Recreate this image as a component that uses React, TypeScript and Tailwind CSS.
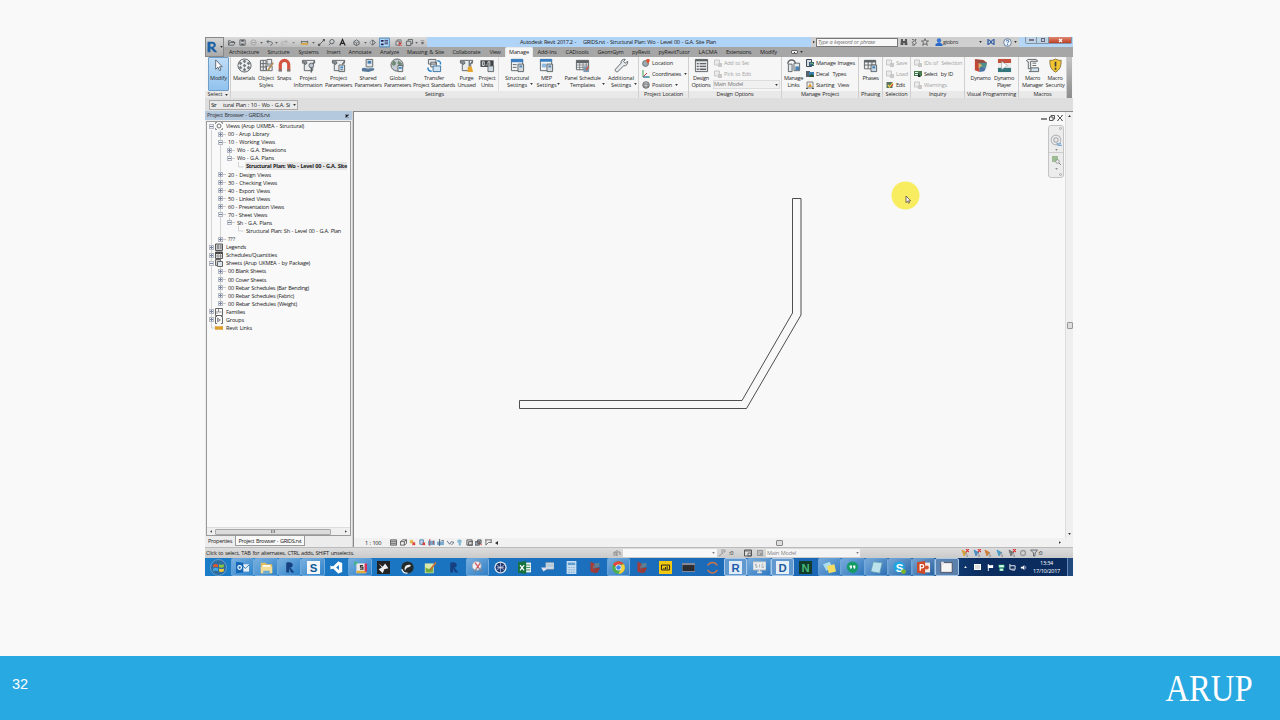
import React, { useLayoutEffect, useRef } from "react";

/* Text set to an exact run width by adjusting its letter spacing. */
function T({ w, className = "", children }: { w: number; className?: string; children: string }) {
  const ref = useRef<HTMLSpanElement>(null);
  useLayoutEffect(() => {
    const el = ref.current;
    if (!el) return;
    el.style.letterSpacing = "0px";
    const natural = el.getBoundingClientRect().width;
    el.style.letterSpacing = `${(w - natural) / children.length}px`;
  }, [w, children]);
  return (
    <span ref={ref} className={`inline-block shrink-0 whitespace-pre [word-spacing:0.6px] ${className}`}>
      {children}
    </span>
  );
}

function Svg({ className = "size-4", box = 16, children }: { className?: string; box?: number; children: React.ReactNode }) {
  return (
    <svg viewBox={`0 0 ${box} ${box}`} className={`block shrink-0 ${className}`} fill="none">
      {children}
    </svg>
  );
}

const Caret = ({ className = "" }: { className?: string }) => (
  <svg viewBox="0 0 4 3" className={`h-[2px] w-[3px] shrink-0 ${className}`}>
    <path d="M0 0h4L2 3z" fill="#333" />
  </svg>
);

/* ---------- ribbon icons ---------- */
const G = "#5f6468";
const clipboard = (
  <>
    <path d="M1.500 2.500h13v3h-2v8h-9v-8h-2z" fill="#e9eaeb" stroke={G} />
    <path d="M2 3l2.500 4 2-1.500L5 3M14.500 2.500l-2 4" stroke={G} fill="#8c9195" />
  </>
);
const ic = {
  modify: <path d="M5 2v10l2.400-2.200L9 13.500l1.600-.8L9 9.300h3z" fill="#fff" stroke="#5b6570" />,
  materials: (
    <>
      <circle cx="8" cy="8" r="7" fill="#eef0f1" stroke={G} />
      <path d="M8 1.500l2 2-2 2-2-2zM8 6l2 2-2 2-2-2zM8 10.500l2 2-2 2-2-2zM3.700 3.700l2 2-2 2-2-2zM12.300 3.700l2 2-2 2-2-2zM3.700 8.300l2 2-2 2-2-2zM12.300 8.300l2 2-2 2-2-2z" fill="#777c80" />
    </>
  ),
  styles: (
    <>
      <path d="M1.500 2.500h6v11h-6zM8.500 1.500h5v5h-5z" fill="#e8eaec" stroke={G} />
      <path d="M1.500 6h6M1.500 9.500h6M4.500 2.500v11M8 8.500h6v5H8z" stroke={G} />
      <path d="M15 4l-5 7-2 3 3-1.500L15.500 6z" fill="#b08a54" />
    </>
  ),
  snaps: (
    <>
      <path d="M3.500 14V7a4.500 4.500 0 019 0v7" stroke="#d4553f" strokeWidth="3.400" />
      <path d="M1.800 12h3.400v2.500H1.800zM10.800 12h3.400v2.500h-3.400z" fill="#777" />
    </>
  ),
  info: (
    <>
      {clipboard}
      <circle cx="11" cy="8" r="2.500" fill="#bcc6d0" stroke={G} />
      <path d="M11 10v5.500" stroke={G} strokeWidth="1.500" />
    </>
  ),
  params: (
    <>
      {clipboard}
      <path d="M8.500 7.500h6v7h-6z" fill="#dfe8f0" stroke={G} />
      <path d="M10 9h3v2h-3z" fill="#3f87c4" />
      <path d="M10 12.500h3" stroke={G} />
    </>
  ),
  shared: (
    <>
      <path d="M5.500 1.500h7v8h-7z" fill="#e1e7ec" stroke={G} />
      <path d="M7 3h4v3H7z" fill="#4a7eae" />
      <path d="M1 11c4-2 5 1 8 0h5v2l-6 2-7-1z" fill="#57799a" />
    </>
  ),
  global: (
    <>
      <circle cx="7.500" cy="7.500" r="6.500" fill="#c4cbd0" stroke={G} />
      <path d="M3 3c3 0 4 2 3 4s-3 1-4 0M9 2c0 2 4 2 4 5l-3 1-2-2z" fill="#6f8a72" />
      <path d="M8.500 8h5v6.500h-5z" fill="#dfe8f0" stroke={G} />
      <path d="M9.500 9.500h3v2h-3z" fill="#3f87c4" />
    </>
  ),
  transfer: (
    <>
      <path d="M1.500 1.500h8v5h-8zM4 4.500h6v5H4z" fill="#e4e6e8" stroke={G} />
      <path d="M6.500 8.500h8v6h-8z" fill="#cfe2f3" stroke="#39749f" />
      <path d="M1 10c0 3 2 4 4 4M11 3c3 0 3.500 1 3.500 4" stroke="#2e86c8" strokeWidth="1.600" />
    </>
  ),
  purge: (
    <>
      {clipboard}
      <path d="M11 3v6" stroke="#6c7a89" strokeWidth="1.500" />
      <path d="M9.500 9h4l1.500 6H9z" fill="#e6a62e" />
    </>
  ),
  units: (
    <>
      <path d="M.500 2.500h14v7H.500z" fill="#3d4246" />
      <path d="M2.500 4h2v4h-2zM8.500 4h2v4h-2z" stroke="#f1f1f1" strokeWidth=".9" />
      <path d="M6 7.500h1" stroke="#fff" />
      <path d="M8.500 8.500h6v6h-6z" fill="#cdd9e3" stroke={G} />
    </>
  ),
  structural: (
    <>
      <path d="M1.500 1.500h12v12h-12z" fill="#f0f2f4" stroke={G} />
      <path d="M1 1h13v3.500H1z" fill="#3a80c2" />
      <path d="M3 7h4M3 10h4" stroke={G} />
      <path d="M8.500 6.500h6v8h-6z" fill="#d2d9de" stroke={G} />
      <path d="M10 8h3v2h-3z" fill="#4c86b8" />
    </>
  ),
  mep: (
    <>
      <path d="M1.500 1.500h12v12h-12z" fill="#f0f2f4" stroke={G} />
      <path d="M1 1h13v3H1z" fill="#3a80c2" />
      <path d="M3 6h5v4H3z" fill="#8fbbe0" />
      <path d="M8.500 6.500h6v8h-6z" fill="#d2d9de" stroke={G} />
      <path d="M10 8h3v2h-3z" fill="#4c86b8" />
    </>
  ),
  schedule: (
    <>
      <path d="M1.500 2.500h13v10h-13z" fill="#f2f2f2" stroke={G} />
      <path d="M1.500 4h13" stroke={G} strokeWidth="3" />
      <path d="M1.500 7.500h13M1.500 10h13M5 3v10M8.500 3v10M12 3v10" stroke={G} strokeWidth=".7" />
      <path d="M9 9h6v6H9z" fill="#7c99af" />
      <path d="M12 13l2.500-4" stroke="#c95845" strokeWidth="1.500" />
    </>
  ),
  wrench: <path d="M14.500 3.500l-2.600 2.100-1.700-1.700 1.800-2.500c-2.700-.6-5 1.500-4.400 4L1.500 12c-1 1.500 1 3.500 2.500 2.500l6.400-6.200c2.700.5 4.700-2 4.100-4.800z" fill="#e8ebed" stroke={G} />,
  options: (
    <>
      <path d="M1.500 1.500h13v13h-13z" fill="#e6e6e6" stroke={G} />
      <path d="M1.500 2.500h13" stroke={G} strokeWidth="2" />
      <path d="M3 6h2M3 9h2M3 12h2M6 6h7M6 9h7M6 12h7" stroke={G} strokeWidth="1.400" />
    </>
  ),
  links: (
    <>
      <path d="M2 6a4 4 0 018 0" stroke={G} strokeWidth="1.600" />
      <path d="M2.500 6.500h4v8h-4zM8.500 5.500h6v8h-6z" fill="#e3e8eb" stroke={G} />
      <path d="M10 9h4v4h-4z" fill="#4a83b4" />
    </>
  ),
  phases: (
    <>
      <path d="M1.500 2.500h12v9h-12z" fill="#f0f0f0" stroke={G} />
      <path d="M1.500 3.500h12" stroke={G} strokeWidth="2.500" />
      <path d="M1.500 7.500h12M5.500 3v8M9.500 3v8" stroke={G} />
      <path d="M8.500 7.500h6v7h-6z" fill="#c6d8e6" stroke={G} />
      <path d="M10 9h3v2h-3z" fill="#3f7db1" />
    </>
  ),
  dynamo: (
    <>
      <path d="M2 1l5 3v11l-5-2z" fill="#c04a37" />
      <path d="M2 1l9 1 4 3-8 2z" fill="#a0493f" />
      <path d="M7 5l8 0-1 5-7 1z" fill="#4d8f8a" />
      <path d="M7 10h7l-2 4-5 1z" fill="#4c73a6" />
      <path d="M6 5l4 3-4 3z" fill="#d8b46c" />
    </>
  ),
  player: (
    <>
      <path d="M1 1h14v4.500H1z" fill="#c4513e" />
      <path d="M1 5.500h14v5H1z" fill="#ececec" />
      <path d="M1 10.500h14V15H1z" fill="#34787e" />
      <path d="M5 3.500l6 4.500-6 4.500z" fill="#fff" stroke="#69777c" strokeWidth=".5" />
    </>
  ),
  macro: (
    <>
      <path d="M3 1.500h9l1.500 2H6v8H3.500V4L1.500 3z" fill="#ececec" stroke={G} />
      <path d="M8 5.500h4M8 8h4" stroke={G} />
      <path d="M6.500 10.500h8v4h-10c2 0 2-2 2-4z" fill="#cfe0ec" stroke={G} />
    </>
  ),
  security: (
    <>
      <path d="M8 1c2 1.500 4 1.500 6 1.500 0 6-1 10-6 12.500C3 12.500 2 8.500 2 2.500 4 2.500 6 2.500 8 1z" fill="#f3c530" stroke="#85723a" />
      <path d="M8 4v5M8 10.500v2" stroke="#40403a" strokeWidth="1.800" />
    </>
  ),
};

function Big({ icon, lines, w, drop, active }: { icon: React.ReactNode; lines: [string, number][]; w: string; drop?: boolean; active?: boolean }) {
  return (
    <div className={`relative flex h-[34px] shrink-0 flex-col items-center ${w} ${active ? "rounded-[1px] border border-[#6f9fc9] bg-linear-to-b from-[#bfdcf5] to-[#90c3ee]" : ""}`}>
      <Svg className={`mb-[2px] size-[15px] ${active ? "mt-0" : "mt-[1px]"}`}>{icon}</Svg>
      {lines.map(([t, n]) => (
        <T key={t} w={n} className="leading-[7px]">{t}</T>
      ))}
      {drop && <Caret className="absolute right-0 bottom-[6px]" />}
    </div>
  );
}

function Panel({ w, label, labelW, children, drop }: { w: string; label: string; labelW: number; children: React.ReactNode; drop?: boolean }) {
  return (
    <div className={`flex h-[41px] shrink-0 flex-col border-r border-[#cfcfcf] ${w}`}>
      <div className="flex h-[34px]">{children}</div>
      <div className="flex h-[7px] items-center justify-center gap-[2px] bg-[#e9e9e9]">
        <T w={labelW} className="leading-[7px]">{label}</T>
        {drop && <Caret />}
      </div>
    </div>
  );
}

function Small({ icon, text, w, drop, off }: { icon: React.ReactNode; text: string; w: number; drop?: boolean; off?: boolean }) {
  return (
    <div className={`flex h-[11px] items-center gap-[2px] ${off ? "text-[#a5a5a5]" : ""}`}>
      <Svg className={`size-[8px] ${off ? "opacity-60" : ""}`} box={8}>{icon}</Svg>
      <T w={w} className="leading-[8px]">{text}</T>
      {drop && <Caret className="ml-[1px]" />}
    </div>
  );
}

const sm = {
  loc: <><circle cx="3.500" cy="4.500" r="3" fill="#9aa7ad" stroke="#56616a" strokeWidth=".7" /><path d="M6 5L4.300 2a1.800 1.800 0 113.400 0z" fill="#dd5633" /></>,
  coord: <><path d="M1 0v7h7" stroke="#3aa348" /><path d="M1 7l4-4" stroke="#c34" /><path d="M1 7h6" stroke="#3a78c8" /></>,
  pos: <><circle cx="4" cy="4" r="3.300" fill="#c3c8cb" stroke="#555" strokeWidth=".8" /><path d="M2 3h4v3H2z" stroke="#666" strokeWidth=".7" /></>,
  grey: <><path d="M.500 1h5v5h-5z" fill="#e4e4e4" stroke="#999" strokeWidth=".8" /><path d="M4 4h4v4H4z" fill="#aaa" /></>,
  img: <><path d="M.500.500h5v7h-5z" fill="#ddd" stroke="#3b4c5c" /><path d="M3 3h5v4H3z" fill="#33617f" /><path d="M4 5l2-1 2 2" stroke="#7ec06c" /></>,
  decal: <><path d="M0 1h4v6H0z" fill="#56626d" /><path d="M3 2h5v5H3z" fill="#377fae" /><path d="M3 6l3-2 2 2v1H3z" fill="#2c5133" /></>,
  start: <><path d="M1 1h6v6H1z" fill="#eee" stroke="#666" strokeWidth=".8" /><path d="M2 6l2-4 2 4z" fill="#e09a2d" /><path d="M0 7.500h2M6 7.500h2" stroke="#555" /></>,
  edit: <><path d="M.500 1h6v6h-6z" fill="#5a7560" /><path d="M2 4l1.500 2L7 2" stroke="#f2cf4c" strokeWidth="1.400" /><path d="M5 6l2-3" stroke="#c33" /></>,
  byid: <><path d="M0 1h8v5H0z" fill="#4a7b4f" /><path d="M1 2h3v1H1zM1 4h3v1H1z" fill="#dfe" /><path d="M4 3l3 4H4z" fill="#233" /></>,
};

function Ribbon() {
  return (
    <div className="flex h-[41px] bg-[#f6f6f6] text-[#2b2b2b]">
      <Panel w="w-[26px]" label="Select" labelW={15} drop>
        <div className="flex pl-[3px]"><Big active w="w-[21px]" icon={ic.modify} lines={[["Modify", 17]]} /></div>
      </Panel>
      <Panel w="w-[408px]" label="Settings" labelW={19}>
        <Big w="ml-[1px] w-[24px]" icon={ic.materials} lines={[["Materials", 22]]} />
        <Big w="w-[20px]" icon={ic.styles} lines={[["Object", 16], ["Styles", 14]]} />
        <Big w="w-[16px]" icon={ic.snaps} lines={[["Snaps", 14]]} />
        <Big w="w-[32px]" icon={ic.info} lines={[["Project", 17], ["Information", 29]]} />
        <Big w="w-[29px]" icon={ic.params} lines={[["Project", 17], ["Parameters", 27]]} />
        <Big w="w-[30px]" icon={ic.shared} lines={[["Shared", 17], ["Parameters", 27]]} />
        <Big w="w-[29px]" icon={ic.global} lines={[["Global", 16], ["Parameters", 27]]} />
        <Big w="w-[44px]" icon={ic.transfer} lines={[["Transfer", 20], ["Project Standards", 42]]} />
        <Big w="w-[21px]" icon={ic.purge} lines={[["Purge", 14], ["Unused", 18]]} />
        <Big w="w-[20px]" icon={ic.units} lines={[["Project", 17], ["Units", 12]]} />
        <div className="mr-[2px] ml-[1px] h-[34px] w-px bg-[#ddd]" />
        <Big drop w="w-[32px]" icon={ic.structural} lines={[["Structural", 24], ["Settings", 20]]} />
        <Big drop w="w-[27px]" icon={ic.mep} lines={[["MEP", 11], ["Settings", 20]]} />
        <Big drop w="w-[45px]" icon={ic.schedule} lines={[["Panel Schedule", 36], ["Templates", 25]]} />
        <Big drop w="w-[32px]" icon={ic.wrench} lines={[["Additional", 26], ["Settings", 20]]} />
      </Panel>
      <Panel w="w-[50px]" label="Project Location" labelW={39}>
        <div className="pl-[3px]">
          <Small icon={sm.loc} text="Location" w={21} />
          <Small icon={sm.coord} text="Coordinates" w={29} drop />
          <Small icon={sm.pos} text="Position" w={20} drop />
        </div>
      </Panel>
      <Panel w="w-[93px]" label="Design Options" labelW={37}>
        <Big w="w-[24px]" icon={ic.options} lines={[["Design", 16], ["Options", 19]]} />
        <div className="flex w-[67px] flex-col">
          <div className="pl-[1px]"><Small off icon={sm.grey} text="Add to Set" w={25} /></div>
          <div className="pl-[1px]"><Small off icon={sm.grey} text="Pick to Edit" w={27} /></div>
          <div className="mt-px flex h-[9px] items-center justify-between border border-[#ddd] bg-[#f1f1f1] pr-[1px] text-[#777]">
            <T w={29} className="leading-[7px]">Main Model</T>
            <Caret />
          </div>
        </div>
      </Panel>
      <Panel w="w-[77px]" label="Manage Project" labelW={38}>
        <Big w="w-[23px]" icon={ic.links} lines={[["Manage", 19], ["Links", 12]]} />
        <div className="pl-[1px]">
          <Small icon={sm.img} text="Manage Images" w={39} />
          <Small icon={sm.decal} text="Decal  Types" w={30} />
          <Small icon={sm.start} text="Starting  View" w={33} />
        </div>
      </Panel>
      <Panel w="w-[24px]" label="Phasing" labelW={19}>
        <Big w="w-[23px]" icon={ic.phases} lines={[["Phases", 16]]} />
      </Panel>
      <Panel w="w-[28px]" label="Selection" labelW={22}>
        <div className="pl-[3px]">
          <Small off icon={sm.grey} text="Save" w={11} />
          <Small off icon={sm.grey} text="Load" w={12} />
          <Small icon={sm.edit} text="Edit" w={9} />
        </div>
      </Panel>
      <Panel w="w-[54px]" label="Inquiry" labelW={17}>
        <div className="pl-[3px]">
          <Small off icon={sm.grey} text="IDs of  Selection" w={38} />
          <Small icon={sm.byid} text="Select  by ID" w={29} />
          <Small off icon={sm.grey} text="Warnings" w={23} />
        </div>
      </Panel>
      <Panel w="w-[54px]" label="Visual Programming" labelW={49}>
        <Big w="ml-[3px] w-[25px]" icon={ic.dynamo} lines={[["Dynamo", 20]]} />
        <Big w="w-[22px]" icon={ic.player} lines={[["Dynamo", 20], ["Player", 14]]} />
      </Panel>
      <Panel w="w-[48px]" label="Macros" labelW={18}>
        <Big w="ml-[2px] w-[23px]" icon={ic.macro} lines={[["Macro", 15], ["Manager", 21]]} />
        <Big w="w-[22px]" icon={ic.security} lines={[["Macro", 15], ["Security", 19]]} />
      </Panel>
      <div className="mr-[1px] grow bg-linear-to-b from-[#c4c4c4] to-[#8d8d8d]" />
    </div>
  );
}

/* ---------- title bar ---------- */
const K = "#565b60";
const down = <path d="M2.500 3.500h3L4 5.500z" fill={K} />;
const qat: [string, React.ReactNode][] = [
  ["w-[12px]", <path d="M.500 7V2h2.500l1 1h3v1.500M.500 7l1.500-3h6L6.500 7z" stroke={K} />],
  ["w-[11px]", <><path d="M1 1h6v6H1z" stroke={K} /><path d="M2.500 1h3v2h-3zM2.500 5h3v2h-3z" fill={K} /></>],
  ["w-[11px]", <><circle cx="4" cy="4" r="3" stroke="#a2a2a2" /><path d="M2 4h4" stroke="#999" /></>],
  ["w-[5px]", down],
  ["w-[10px]", <path d="M3 1L1 3l2 2M1 3h4c3 0 3 4 0 4" stroke={K} />],
  ["w-[5px]", down],
  ["w-[10px]", <path d="M5 1l2 2-2 2M7 3H3C0 3 0 7 3 7" stroke="#aaa" />],
  ["w-[8px]", <path d="M2.500 3.500h3L4 5.500z" fill="#888" />],
  ["w-[14px]", <><path d="M.500 2v4M7.500 2v4M1 3h6" stroke={K} /><path d="M0 4.500h8v2H0z" fill="#d9a43a" /></>],
  ["w-[4px]", down],
  ["w-[12px]", <><path d="M1.500 6.500l5-5" stroke={K} /><path d="M0 5.500h2.500V8H0zM5.500 0H8v2.500H5.500z" fill={K} /></>],
  ["w-[9px]", <><circle cx="4.500" cy="3" r="2.500" stroke={K} /><path d="M1 7l2-2" stroke={K} /></>],
  ["w-[12px]", <path d="M1 7.500L4 .500l3 7M2.200 5h3.600" stroke="#222" strokeWidth="1.300" />],
  ["w-[16px]", <><path d="M1 3l3-2 3 2v3L4 7.500 1 6z" stroke={K} /><path d="M1 3l3 1.500L7 3M4 4.500v3" stroke={K} strokeWidth=".7" /></>],
  ["w-[3px]", down],
  ["w-[10px]", <path d="M1 4l3-3 3 3-3 3zM4 1v6l3-3z" fill="#ddd" stroke={K} strokeWidth=".8" />],
  ["w-[14px]", <><path d="M-1.500-1h11V9h-11z" fill="#b8dbf7" stroke="#3c7fb9" /><path d="M0 1h3v2H0zM0 5h3v2H0z" fill="#225" /><path d="M4 1.500h4M4 3.500h4M4 5.500h4" stroke="#225" /></>],
  ["w-[14px]", <><path d="M1 2.500h4.500V7H1zM2.500 2.500V1H7v3" stroke={K} strokeWidth=".8" /><path d="M4 4l3.500 3.500M7.500 4L4 7.500" stroke="#d22" strokeWidth="1.200" /></>],
  ["w-[9px]", <path d="M.500 2.500h5v5h-5zM2.500 2.500v-2h5v5h-2" stroke={K} />],
  ["w-[5px]", down],
  ["w-[7px]", <path d="M2 2h4M2.500 4h3L4 6z" fill={K} stroke={K} strokeWidth=".6" />],
];

function TitleBar() {
  return (
    <div className="flex h-[10px] items-center bg-[#cfcfcf]">
      <div className="flex h-[10px] w-[203px] items-center bg-linear-to-b from-[#dcdcdc] to-[#bdbdbd] pl-[1px]">
        {qat.map(([w, node], i) => (
          <div key={i} className={`flex shrink-0 justify-center ${w}`}>
            <Svg className="size-[7px] overflow-visible" box={8}>{node}</Svg>
          </div>
        ))}
      </div>
      <div className="flex h-[10px] w-[384px] items-center bg-[#b0d4f7] pl-[93px] text-[#222]">
        <T w={56} className="leading-[10px]">Autodesk Revit 2017.2 -</T>
        <T w={133} className="ml-[7px] leading-[10px]">GRIDS.rvt - Structural Plan: Wo - Level 00 - G.A. Site Plan</T>
      </div>
      <div className="flex w-[5px] justify-center">
        <svg viewBox="0 0 3 4" className="h-[4px] w-[2px]"><path d="M0 0v4l3-2z" fill="#333" /></svg>
      </div>
      <div className="flex h-[9px] w-[82px] items-center border border-[#777] bg-[#f8f8f8] pl-[1px] text-[#777] italic">
        <T w={57} className="leading-[7px]">Type a keyword or phrase</T>
      </div>
      <div className="flex grow items-center pl-[2px] text-[#333]">
        <Svg className="mr-[2px] size-[8px]" box={8}><path d="M1 1h2v2l.500 4h-3zM5 1h2v2l.500 4h-3zM3 3h2v2H3z" fill="#555" /></Svg>
        <Svg className="mr-[3px] size-[8px]" box={8}><path d="M2 1.500c3 0 2 2 4-.5M6 1L5 3.500c2 1 1 3-1 3l-2-2L4 3M2 7h3" stroke="#666" /></Svg>
        <Svg className="mr-[6px] size-[8px]" box={8}><path d="M4 .700l1 2.300h2.500L5.500 4.600l.8 2.700L4 5.700 1.700 7.300l.8-2.700L.500 3H3z" stroke="#555" strokeWidth=".8" /></Svg>
        <Svg className="size-[8px]" box={8}><circle cx="4" cy="2.500" r="2.200" fill="#3a78d2" /><path d="M.500 8V6L4 4.500 7.500 6v2z" fill="#2767c8" /></Svg>
        <T w={15} className="leading-[9px]">giobro</T>
        <Caret className="mr-[5px] ml-auto" />
        <Svg className="mr-[8px] size-[8px]" box={8}><path d="M1 1.500c3 0 3 5 6 5M7 1.500c-3 0-3 5-6 5M1 1v6M7 1v6" stroke="#2c59a4" strokeWidth="1.200" /></Svg>
        <Svg className="mr-[2px] size-[9px]" box={9}><circle cx="4.500" cy="4.500" r="3.800" fill="#eef4fa" stroke="#4e6a8c" strokeWidth=".8" /><path d="M3.300 3.400c0-1.600 2.500-1.400 2.400 0 0 .9-1.200.9-1.200 2M4.500 6.200v1" stroke="#1d57a6" strokeWidth=".9" /></Svg>
        <Caret className="mr-[2px]" />
      </div>
      <div className="flex h-[10px] w-[54px] items-start justify-end bg-[#b5d6f5] pr-[1px]">
        <div className="flex h-[7px] rounded-b-[2px] border-x border-b border-[#7f95ab]">
          <div className="flex w-[11px] items-center justify-center border-r border-[#7f95ab] bg-[#bed2e5]"><div className="h-[2px] w-[5px] border border-[#778]" /></div>
          <div className="flex w-[12px] items-center justify-center border-r border-[#7f95ab] bg-[#bed2e5]"><div className="size-[4px] border border-[#667]" /></div>
          <div className="flex w-[22px] items-center justify-center bg-linear-to-b from-[#df8871] to-[#bd3c24]">
            <Svg className="size-[5px]" box={5}><path d="M1 1l3 3M4 1L1 4" stroke="#fff" strokeWidth="1.300" /></Svg>
          </div>
        </div>
      </div>
    </div>
  );
}

const tabs: [string, number, string, boolean?][] = [
  ["Architecture", 30, "w-[38px]"], ["Structure", 22, "w-[31px]"], ["Systems", 20, "w-[29px]"], ["Insert", 14, "w-[21px]"],
  ["Annotate", 23, "w-[32px]"], ["Analyze", 19, "w-[27px]"], ["Massing & Site", 37, "w-[45px]"], ["Collaborate", 28, "w-[37px]"],
  ["View", 11, "w-[20px]"], ["Manage", 20, "w-[28px]", true], ["Add-Ins", 19, "w-[28px]"], ["CADtools", 23, "w-[32px]"],
  ["GeomGym", 26, "w-[35px]"], ["pyRevit", 18, "w-[26px]"], ["pyRevitTutor", 31, "w-[40px]"], ["LACMA", 19, "w-[28px]"],
  ["Extensions", 25, "w-[33px]"], ["Modify", 17, "w-[27px]"],
];

function Tabs() {
  return (
    <div className="flex h-[10px] bg-[#a6a6a6] pl-[1px] text-[#222]">
      {tabs.map(([t, n, w, on]) => (
        <div key={t} className={`flex shrink-0 items-center justify-center ${w} ${on ? "rounded-t-[2px] border-x border-t border-[#e9e9e9] bg-[#f6f6f6]" : ""}`}>
          <T w={n} className="leading-[9px]">{t}</T>
        </div>
      ))}
      <div className="ml-[9px] flex items-center gap-[2px]">
        <div className="flex h-[4px] w-[7px] items-center justify-center rounded-[1px] border border-[#666] bg-[#eee]"><div className="size-[1px] bg-[#333]" /></div>
        <Caret />
      </div>
    </div>
  );
}

/* ---------- project browser ---------- */
type Row = { d: number; t: string; w: number; s?: "+" | "-" | ""; icon?: React.ReactNode; bold?: boolean };
const rows: Row[] = [
  { d: 0, s: "-", t: "Views (Arup UKMEA - Structural)", w: 78, icon: <><circle cx="4" cy="4" r="2" stroke="#555" strokeWidth=".8" /><path d="M.500 2V.500H2M6 .500h1.500V2M7.500 6v1.500H6M2 7.500H.500V6" stroke="#777" strokeWidth=".8" /></> },
  { d: 1, s: "+", t: "00 - Arup Library", w: 41 },
  { d: 1, s: "-", t: "10 - Working Views", w: 47 },
  { d: 2, s: "+", t: "Wo - G.A. Elevations", w: 49 },
  { d: 2, s: "-", t: "Wo - G.A. Plans", w: 37 },
  { d: 3, t: "Structural Plan: Wo - Level 00 - G.A. Site", w: 101, bold: true },
  { d: 1, s: "+", t: "20 - Design Views", w: 43 },
  { d: 1, s: "+", t: "30 - Checking Views", w: 49 },
  { d: 1, s: "+", t: "40 - Export Views", w: 42 },
  { d: 1, s: "+", t: "50 - Linked Views", w: 42 },
  { d: 1, s: "+", t: "60 - Presentation Views", w: 56 },
  { d: 1, s: "-", t: "70 - Sheet Views", w: 39 },
  { d: 2, s: "-", t: "Sh - G.A. Plans", w: 35 },
  { d: 3, t: "Structural Plan: Sh - Level 00 - G.A. Plan", w: 95 },
  { d: 1, s: "+", t: "???", w: 7 },
  { d: 0, s: "+", t: "Legends", w: 20, icon: <><path d="M.500 1h7v6.500h-7z" fill="#c9cdd0" stroke="#555" /><path d="M2 3h2M2 5h2M5 3h1.500M5 5h1.500" stroke="#555" /></> },
  { d: 0, s: "+", t: "Schedules/Quantities", w: 51, icon: <><path d="M.500 1h7v6.500h-7z" fill="#e8e8e8" stroke="#555" /><path d="M.500 2h7" stroke="#444" strokeWidth="2" /><path d="M.500 5h7M3 2v5M5.500 2v5" stroke="#777" strokeWidth=".7" /></> },
  { d: 0, s: "-", t: "Sheets (Arup UKMEA - by Package)", w: 84, icon: <><path d="M.500.500h5v6h-5z" fill="#ccc" stroke="#666" /><path d="M2.500 2.500h5v5h-5z" fill="#dde5ec" stroke="#666" /></> },
  { d: 1, s: "+", t: "00 Blank Sheets", w: 38 },
  { d: 1, s: "+", t: "00 Cover Sheets", w: 38 },
  { d: 1, s: "+", t: "00 Rebar Schedules (Bar Bending)", w: 81 },
  { d: 1, s: "+", t: "00 Rebar Schedules (Fabric)", w: 66 },
  { d: 1, s: "+", t: "00 Rebar Schedules (Weight)", w: 69 },
  { d: 0, s: "+", t: "Families", w: 19, icon: <><path d="M.500.500h7v7h-7z" stroke="#666" /><path d="M3.500 1v3h3M2 6V3" stroke="#777" strokeWidth=".8" /></> },
  { d: 0, s: "+", t: "Groups", w: 18, icon: <><path d="M2 .500H.500v7H2M6 .500h1.500v7H6" stroke="#666" /><path d="M2.500 2l3 2-3 2z" fill="#bbb" stroke="#777" strokeWidth=".7" /></> },
  { d: 0, s: "", t: "Revit Links", w: 26, icon: <path d="M0 2.500h3.500L4 3l.500-.500H8v3H4.500L4 5l-.500.500H0zM1.500 4h1M5.500 4h1" fill="#e0a22c" stroke="#c98d1b" strokeWidth=".4" /> },
];
const indent = ["pl-[2px]", "pl-[11px]", "pl-[20px]", "pl-[28px]"];

function Browser() {
  return (
    <div className="flex h-[436px] w-[147px] shrink-0 flex-col bg-[#ececec]">
      <div className="flex h-[9px] items-center justify-between bg-[#b4c8de] pr-[3px] pl-[2px] text-[#333]">
        <T w={63} className="leading-[9px]">Project Browser - GRIDS.rvt</T>
        <Svg className="size-[4px]" box={5}><path d="M.700.700l3.600 3.600M4.300.700L.700 4.300" stroke="#111" strokeWidth="1.400" /></Svg>
      </div>
      <div className="mx-[1px] mt-[1px] flex h-[415px] flex-col border border-[#999] bg-[#f9f9f9]">
        <div className="relative grow text-[#222]">
          <svg className="absolute top-0 left-0 h-[220px] w-[40px]" viewBox="0 0 40 220" fill="none">
            <path d="M4.500 8v198h4M13.500 8v109M22.500 24v12M22.500 96v5M31.500 40v5h5M31.500 104v5h5M13.500 145v37" stroke="#d3d3d3" />
          </svg>
          {rows.map((r) => (
            <div key={r.t} className={`relative flex h-[8.080px] items-center ${indent[r.d]}`}>
              {r.s ? (
                <div className="relative z-10 flex size-[5px] shrink-0 items-center justify-center border border-[#b4b9c2] bg-[#f4f4f4]">
                  <div className="absolute h-px w-[3px] bg-[#7781a0]" />
                  {r.s === "+" && <div className="absolute h-[3px] w-px bg-[#7781a0]" />}
                </div>
              ) : (
                <div className="w-[5px] shrink-0" />
              )}
              {r.icon ? <Svg className="mr-[3px] ml-[1px] size-[8px]" box={8}>{r.icon}</Svg> : r.d < 3 ? <div className="mr-[1px] h-px w-[3px] shrink-0 bg-[#ccc]" /> : null}
              <div className={r.bold ? "ml-[5px] h-[8px] bg-[#e6e6e6] pl-[1px] font-bold" : r.d === 3 ? "ml-[6px] h-[8px]" : r.icon ? "h-[8px]" : "ml-[1px] h-[8px]"}>
                <T w={r.w} className="align-top leading-[8px]">{r.t}</T>
              </div>
            </div>
          ))}
        </div>
        <div className="flex h-[8px] items-center justify-between border-t border-[#ddd] bg-[#efefef] px-[3px]">
          <svg viewBox="0 0 3 4" className="h-[3px] w-[2px]"><path d="M3 0v4L0 2z" fill="#444" /></svg>
          <div className="mr-auto ml-[3px] flex h-[6px] w-[116px] items-center justify-center rounded-[1px] border border-[#a8a8a8] bg-[#dcdcdc]"><div className="h-[3px] w-[4px] border-x border-[#888] bg-[#bbb]" /></div>
          <svg viewBox="0 0 3 4" className="h-[3px] w-[2px]"><path d="M0 0v4l3-2z" fill="#444" /></svg>
        </div>
      </div>
      <div className="flex h-[11px] items-start text-[#222]">
        <div className="flex h-[10px] w-[31px] items-center justify-center border-r border-[#999]"><T w={24} className="leading-[8px]">Properties</T></div>
        <div className="flex h-[10px] w-[69px] items-center justify-center border-r border-b border-[#999] bg-[#f9f9f9]"><T w={63} className="leading-[8px]">Project Browser - GRIDS.rvt</T></div>
      </div>
    </div>
  );
}

/* ---------- canvas ---------- */
const viewIcons: React.ReactNode[] = [
  <><path d="M.500 1h7v6h-7z" fill="#ccc" stroke="#555" /><path d="M1 3h6M1 5h6" stroke="#555" strokeWidth=".8" /></>,
  <path d="M.500 3h4.500v4H.500zM.500 3l2.500-2H7.500L5 3M7.500 1v4L5 7" stroke="#555" />,
  <><circle cx="3" cy="3" r="2.200" fill="#e7b94e" /><path d="M4 4l3 3M7 4L4 7" stroke="#d33" strokeWidth="1.300" /></>,
  <><path d="M1 1h4v5H1z" fill="#cde" stroke="#47a" /><path d="M4 4l3 3M7 4L4 7" stroke="#d33" strokeWidth="1.200" /></>,
  <><path d="M0 2h8v5H0z" fill="#79aacf" /><path d="M2 0v8M6 2v4" stroke="#b44" /></>,
  <><path d="M0 3h8v4H0z" fill="#79aacf" /><path d="M3 0v8M5 2h3" stroke="#456" /></>,
  <path d="M0 2l3 4 2-3 3 1-3 3" stroke="#567" />,
  <path d="M4 1a2 2 0 012 2.500L5 5v2H3.500V5L2 3.500A2 2 0 014 1z" fill="#8cc0e4" stroke="#59a" strokeWidth=".5" />,
  <path d="M1 1h6v6H1zM3 3h5v4H3z" stroke="#555" fill="#ddd" />,
  <><path d="M0 3h5v4H0zM3 1h4v4H3z" fill="#9ab" stroke="#555" /><path d="M5 5l3 2" stroke="#c44" /></>,
  <path d="M0 1h8M1 1v6M1 7l3-3h4M7 1v3" stroke="#666" />,
];

function Canvas() {
  return (
    <div className="flex h-[436px] min-w-0 grow flex-col border-t border-l border-[#888] bg-[#f8f8f8]">
      <div className="flex h-[426px]">
        <div className="relative w-[711px] shrink-0">
          <svg viewBox="354 112 711 426" className="block h-[426px] w-[711px]" fill="none">
            <path d="M519.500 400.500H742L792.500 313V198.500H801V315L746.500 408.500H519.500z" stroke="#3a3a3a" strokeWidth=".9" />
            <circle cx="905.500" cy="195.500" r="14" fill="#f8ed60" />
            <path d="M906 196v6.500l1.500-1.300 1 2 1-.5-.9-1.900h2z" fill="#fff" stroke="#544" strokeWidth=".8" />
          </svg>
          <div className="absolute top-[3px] right-[2px] flex gap-[2px]">
            <Svg className="size-[6px]" box={6}><path d="M0 4h6" stroke="#555" strokeWidth="1.400" /></Svg>
            <Svg className="size-[6px]" box={6}><path d="M.500 2h3.500v3.500H.500zM2 2V.500h3.500V4H4" stroke="#555" /></Svg>
            <Svg className="size-[6px]" box={6}><path d="M.500.500l5 5M5.500.500l-5 5M.500.500h1M4.500.500h1M.500 5.500h1M4.500 5.500h1" stroke="#555" /></Svg>
          </div>
          <div className="absolute top-[13px] right-[1px] flex h-[53px] w-[16px] flex-col items-center rounded-[3px] border border-[#c4c4c4] bg-[#ececec]">
            <div className="mt-[1px] mr-[1px] size-[3px] self-end rounded-full border border-[#aaa]" />
            <Svg className="mt-[4px] size-[13px]" box={12}><circle cx="5.500" cy="5.500" r="4.500" stroke="#b4b8bc" /><circle cx="5.500" cy="5.500" r="2" stroke="#aaa" /><path d="M6 9.500c1-2 2 1 4-1M7 10.500h4" stroke="#7fa9d6" /></Svg>
            <Caret className="mt-[2px] opacity-50" />
            <div className="mt-[1px] h-px w-[14px] bg-[#ccc]" />
            <Svg className="mt-[2px] size-[10px]" box={10}><path d="M1 1h6v6H1z" fill="#9cbd93" /><circle cx="6.500" cy="6.500" r="1.800" fill="#eee" stroke="#999" /><path d="M8 8l2 2" stroke="#888" /></Svg>
            <Caret className="mt-[3px] opacity-50" />
            <div className="mt-[3px] mr-[1px] size-[3px] self-end rounded-full border border-[#aaa]" />
          </div>
        </div>
        <div className="flex w-[8px] flex-col items-center justify-between border-l border-[#ddd] bg-[#efefef] py-[3px]">
          <Caret className="rotate-180" />
          <div className="h-[7px] w-[6px] rounded-[1px] border border-[#999] bg-[#ddd]" />
          <Caret />
        </div>
      </div>
      <div className="flex h-[9px] items-center bg-[#f1f1f1] pl-[11px] text-[#222]">
        <T w={16} className="mr-[8px] leading-[8px]">1 : 100</T>
        {viewIcons.map((n, i) => (
          <div key={i} className="flex w-[9.450px] shrink-0 justify-center"><Svg className="size-[7px]" box={8}>{n}</Svg></div>
        ))}
        <svg viewBox="0 0 3 4" className="ml-[2px] h-[4px] w-[3px]"><path d="M3 0v4L0 2z" fill="#333" /></svg>
        <div className="ml-[278px] h-[6px] w-[7px] rounded-[1px] border border-[#888] bg-[#ddd]" />
        <svg viewBox="0 0 3 4" className="mr-[12px] ml-auto h-[3px] w-[2px]"><path d="M0 0v4l3-2z" fill="#333" /></svg>
      </div>
    </div>
  );
}

function StatusBar() {
  const col = ["#d9a33b", "#4b8fc6", "#d77e35", "#4b9cc6", "#777", "#999"];
  return (
    <div className="flex h-[11px] items-center border-t border-[#bbb] bg-linear-to-b from-[#dcdcdc] to-[#cbcbcb] pl-[1px] text-[#222]">
      <T w={148} className="leading-[9px]">Click to select, TAB for alternates, CTRL adds, SHIFT unselects.</T>
      <Svg className="ml-[259px] size-[8px]" box={8}><path d="M1 7V3h2v4M4 1v6M5 3h2v3" stroke="#888" /></Svg>
      <div className="ml-[2px] flex h-[8px] w-[94px] items-center justify-end bg-[#f8f8f8] pr-[2px]"><Caret className="opacity-60" /></div>
      <Svg className="ml-[1px] size-[8px]" box={8}><path d="M1 7l4-3M3 1h4v2H3" stroke="#999" /></Svg>
      <T w={4} className="ml-[3px] leading-[9px]">:0</T>
      <Svg className="ml-[11px] size-[8px]" box={8}><path d="M.500 1h7v6h-7z" fill="#ddd" stroke="#555" /><path d="M1 2h6M4 4h3v3H4z" stroke="#555" strokeWidth=".8" /></Svg>
      <Svg className="ml-[4px] size-[8px]" box={8}><path d="M1 1h6v6H1z" fill="#999" /><path d="M2 3h4M2 5h2" stroke="#ddd" /></Svg>
      <div className="ml-[2px] flex h-[8px] w-[94px] items-center justify-between bg-[#f4f4f4] px-[1px] text-[#888]">
        <T w={29} className="leading-[8px]">Main Model</T>
        <Caret className="opacity-60" />
      </div>
      <div className="ml-[99px] flex items-center">
        {col.map((c, i) => (
          <div key={c} className="flex w-[11.700px] justify-center">
            <Svg className="size-[8px]" box={8}>
              {i === 5 ? <circle cx="4" cy="4" r="2.500" stroke={c} strokeWidth="1.300" /> : <><path d="M1 1l5 3-2 .500L3 7z" fill={c} stroke={c} /><path d="M4 4l2 4 1-1-2-3z" fill="#eee" stroke="#777" strokeWidth=".6" />{i !== 3 && i !== 2 && <path d="M5 0l3 3M8 0L5 3" stroke="#d33" strokeWidth="1.200" />}</>}
            </Svg>
          </div>
        ))}
        <Svg className="ml-[1px] size-[8px]" box={8}><path d="M.500 1h7L5 4v3H3.500V4z" fill="#c9d2da" stroke="#555" strokeWidth=".8" /></Svg>
        <T w={4} className="leading-[9px]">:0</T>
      </div>
    </div>
  );
}

/* ---------- taskbar ---------- */
const revit = <path d="M4 14V2c5-1 8 0 8 3 0 2-1 3-3 3l5 6h-4L7.500 9v5z" fill="#16407f" />;
const dyn = <><path d="M3 1l5 2v12l-5-2z" fill="#a93b35" /><path d="M8 3l6-1v5L8 9z" fill="#5f7f92" /><path d="M8 9l7-1-3 6-4 1z" fill="#9c3a35" /><path d="M6 5l4 2-4 3z" fill="#7a6a70" /></>;
const Glyph = ({ t, c = "#fff" }: { t: string; c?: string }) => (
  <text x="8" y="13" textAnchor="middle" fontFamily="Liberation Sans, sans-serif" fontWeight="700" fontSize="14" fill={c}>{t}</text>
);
const tasks: [React.ReactNode, number][] = [
  [<><path d="M7 4h9v9H7z" fill="#e6eef6" /><path d="M7 5l4.500 4L16 5" stroke="#1668b0" /><path d="M0 1l9 1v12l-9 1z" fill="#1266b5" /><circle cx="4.500" cy="8" r="2.200" stroke="#fff" strokeWidth="1.500" /></>, 1],
  [<><path d="M1 2h6l1 2h7v11H1z" fill="#e3bd5a" /><path d="M3 5h10v4H3z" fill="#fff" /><path d="M1 7h14v8H1z" fill="#f2dd97" /><path d="M4 12h8v3H4z" fill="#6ba9d8" /></>, 1],
  [revit, 1],
  [<><path d="M0 0h16v16H0z" fill="#f4f6f8" /><Glyph t="S" c="#0d5a97" /></>, 1],
  [<><path d="M11 1l4 1.500v11L11 15 2 6.500v3L11 1zm0 4L7.500 8l3.500 3zM2 6.500L.500 5.500v5L2 9.500z" fill="#fff" fillRule="evenodd" /><path d="M2 9.500L11 1M2 6.500L11 15" stroke="#fff" strokeWidth="1.600" /></>, 0],
  [<><path d="M0 1h5v4H0z" fill="#42b08b" /><path d="M3 3h12v12H3z" fill="#e9e9e9" /><path d="M3 12h12v3H3z" fill="#e2ae39" /><path d="M13 3h3v10h-3z" fill="#d4325b" /><path d="M11 5.500H8v2h3v2.500H7.500" stroke="#333" strokeWidth="1.400" /></>, 1],
  [<><path d="M0 0h16v16H0z" fill="#222" /><path d="M2 3l5 4 3-4 4 6-5 1-2 5-5-5 4-2z" fill="#eee" /></>, 0],
  [<><circle cx="8" cy="8" r="7.500" fill="#252b2d" /><path d="M5 12C3 7 7 3 12 5c0 4-5 1-7 7z" fill="#eee" /><path d="M1 10a7 7 0 007 5" stroke="#fff" strokeWidth="1.500" /></>, 0],
  [<><path d="M1 3h11v12H1z" fill="#d9e9a9" /><path d="M2 8l4 2 5-4v8H2z" fill="#70a93c" /><path d="M7 10l7-9 1.500 1.500L9 11z" fill="#cc6c38" /></>, 0],
  [revit, 0],
  [<><circle cx="7" cy="6" r="5.500" fill="#edeff4" stroke="#aaa" /><path d="M5 2l5 7M11 3L7 9" stroke="#d2545c" strokeWidth="1.500" /><path d="M10 9l4 4M7 9l-3 5" stroke="#7d8794" strokeWidth="1.500" /></>, 1],
  [<><circle cx="8" cy="8" r="7.500" fill="#e9eef5" /><circle cx="8" cy="8" r="6" fill="#1f3a70" /><path d="M3 5l10 6M13 5L3 11M8 2v12M4 8h8" stroke="#dde" strokeWidth=".8" /></>, 0],
  [<><path d="M8 2h8v12H8z" fill="#e9f2ec" /><path d="M10 5h5M10 8h5M10 11h5" stroke="#237a48" /><path d="M0 1.500L10 0v16L0 14.500z" fill="#17713f" /><path d="M2.500 5l5 6.500M7.500 5l-5 6.500" stroke="#fff" strokeWidth="1.600" /></>, 0],
  [<><path d="M6 2h10v8H6z" fill="#e9eef2" stroke="#89a" /><path d="M7 3h8v5H7z" fill="#b4cbdc" /><path d="M0 8h7v2l-4 3z" fill="#dde" /></>, 0],
  [<><path d="M2 0h12v16H2z" fill="#c5ddf0" /><path d="M3.500 2h9v3h-9z" fill="#5e9dd0" /><path d="M4 8h8M4 11h8M4 14h8" stroke="#8fb6d6" strokeDasharray="2 1" strokeWidth="1.500" /></>, 0],
  [dyn, 0],
  [<><circle cx="8" cy="8" r="7.800" fill="#4caf50" /><path d="M8 .200A7.800 7.800 0 0114.800 4.200H8L4.500 7 1.200 4.200A7.800 7.800 0 018 .200z" fill="#df4a3c" /><path d="M14.800 4.200A7.800 7.800 0 018 15.800L11.500 9V4.200z" fill="#f6cf3e" /><circle cx="8" cy="8" r="3.600" fill="#fff" /><circle cx="8" cy="8" r="2.800" fill="#3f83ec" /></>, 1],
  [dyn, 0],
  [<><path d="M0 0h16v16H0z" fill="#f2c811" /><path d="M3 5h10v6H3z" stroke="#222" strokeWidth="1.200" /><path d="M6 10V8.500M8 10V7.500M10 10V6.500" stroke="#222" strokeWidth="1.200" /></>, 0],
  [<><path d="M0 3h16v10H0z" fill="#2a2c2f" stroke="#99a" /><path d="M0 3h16v2H0z" fill="#889" /></>, 0],
  [<><path d="M2 5.500c3-5 9-5 12 0" stroke="#c9744a" strokeWidth="1.800" /><path d="M2 11c3 5 9 5 12 0" stroke="#c9744a" strokeWidth="1.800" /></>, 0],
  [<><path d="M0 0h16v16H0z" fill="#dfebf7" /><Glyph t="R" c="#1d5ba6" /></>, 2],
  [<><path d="M0 1h16v10H0z" fill="#eceff1" stroke="#b5bcc2" /><path d="M5 4H3v2h2v2H3M8 4v4M13 4h-2v4h2V6" stroke="#999" strokeWidth=".8" /><path d="M5 14h6M8 11v3" stroke="#ddd" strokeWidth="2" /></>, 1],
  [<><path d="M0 0h16v16H0z" fill="#e6eef6" /><Glyph t="D" c="#1d5a9b" /></>, 2],
  [<><path d="M0 0h16v16H0z" fill="#123d2b" /><Glyph t="N" c="#45b878" /></>, 0],
  [<><path d="M0 4l8-3 4 7-8 4z" fill="#aadcec" /><path d="M5 6l9-2 2 9-9 2z" fill="#f3dc62" /></>, 1],
  [<><circle cx="8" cy="7.500" r="7" fill="#159c66" /><path d="M8 13v3l5-4z" fill="#159c66" /><path d="M4.500 5.500h2.800v3L5.500 10V8h-1zM8.700 5.500h2.800v3L9.700 10V8h-1z" fill="#fff" /></>, 1],
  [<path d="M4 1l11 1-3 13-11-2z" fill="#bce2ec" stroke="#5f9bb4" />, 1],
  [<><circle cx="7.500" cy="7.500" r="7" fill="#1da5e0" /><Glyph t="S" /><circle cx="13" cy="13" r="3" fill="#7cb82e" /></>, 1],
  [<><path d="M8 2h8v12H8z" fill="#f6e9e4" /><circle cx="12" cy="8" r="2.500" fill="#d35230" /><path d="M0 1.500L10 0v16L0 14.500z" fill="#cf4a27" /><path d="M4 12V4.500h2c3 0 3 4 0 4H4" stroke="#fff" strokeWidth="1.600" /></>, 1],
  [<><path d="M1 2h14v12H1z" fill="#f6f6f6" stroke="#445" /><circle cx="3" cy="2.500" r="2" fill="#ddd" /></>, 2],
];

function Taskbar() {
  return (
    <div className="flex h-[18px] items-center bg-linear-to-r from-[#1b7cc8] via-[#1b66b4] via-75% to-[#0b2c5e] to-90%">
      <div className="flex w-[26px] justify-center">
        <Svg className="size-[17px]"><circle cx="8" cy="8" r="7.500" fill="#2f6ca0" stroke="#8db9dd" strokeWidth=".6" /><path d="M3 5.500c2-1 3-1 4.500-.2v2.500C6 7 5 7 3 8z" fill="#e2572c" /><path d="M8.500 5c1.500.7 3 .7 4.500 0v2.500c-1.500.8-3 .8-4.500.2z" fill="#8cc63e" /><path d="M3 9c2-1 3-1 4.500-.2v2.500C6 10.500 5 10.500 3 11.500z" fill="#44a9e4" /><path d="M8.500 9c1.500.7 3 .7 4.500 0v2.500c-1.500.8-3 .8-4.500.2z" fill="#f4c733" /></Svg>
      </div>
      {tasks.map(([node, lit], i) => (
        <div key={i} className={`flex h-[18px] w-[23.480px] shrink-0 items-center justify-center ${lit === 2 ? "rounded-[2px] border border-[#a9c8e8] bg-[#a6c7e8]/50" : lit === 1 ? "rounded-[2px] border border-[#78aedd]/70 bg-linear-to-br from-[#9fc6ea]/70 to-[#4b93d2]/40" : ""}`}>
          <Svg className="size-[13px]">{node}</Svg>
        </div>
      ))}
      <div className="flex grow items-center pl-[5px] text-white">
        <svg viewBox="0 0 4 3" className="mr-[7px] h-[2px] w-[3px]"><path d="M0 3h4L2 0z" fill="#fff" /></svg>
        <div className="mr-[6px] h-[6px] w-[7px] border border-white bg-[#ddd]" />
        <Svg className="mr-[4px] size-[7px]" box={8}><path d="M1.500 0v8" stroke="#fff" /><path d="M1 1l3 .500L7 1v3.500H1z" fill="#fff" /></Svg>
        <Svg className="mr-[4px] size-[7px]" box={8}><path d="M1 1h6v3H1zM2 5h4v3H2z" fill="#dfe" stroke="#3b7" strokeWidth=".6" /></Svg>
        <Svg className="mr-[4px] size-[7px]" box={8}><path d="M1 2h6v4H1zM3 8h4M1 0v2" stroke="#fff" /></Svg>
        <Svg className="mr-[6px] size-[7px]" box={8}><path d="M1 3h2l2-2v6L3 5H1z" fill="#fff" /><path d="M6.500 2.500v3" stroke="#aac" /></Svg>
        <div className="flex w-[28px] flex-col items-center">
          <T w={13} className="leading-[8px]">13:34</T>
          <T w={27} className="leading-[8px]">17/10/2017</T>
        </div>
        <div className="ml-auto h-[18px] w-[6px] border-l border-[#5f86b5] bg-[#234a7f]" />
      </div>
    </div>
  );
}

export default function App() {
  return (
    <div className="flex h-[720px] w-[1280px] flex-col overflow-hidden bg-[#f9f9f9]">
      <div className="mt-[37px] ml-[205px] flex h-[539px] w-[868px] flex-col overflow-hidden bg-[#dfdfdf] text-[5.600px] font-['Open_Sans','Noto_Sans',sans-serif]">
        <div className="flex h-[20px]">
          <div className="flex w-[19px] shrink-0 items-center justify-center gap-[2px] border border-[#888] bg-linear-to-b from-[#d5d5d5] to-[#aaa]">
            <Svg className="size-[12px]"><path d="M2 15V1h6c6 0 7 7 2 8l5 6h-4L6 9.500V15zM6 3.500v4h2c3 0 3-4 0-4z" fill="#1e62a8" fillRule="evenodd" /></Svg>
            <Caret />
          </div>
          <div className="w-[849px]">
            <TitleBar />
            <Tabs />
          </div>
        </div>
        <Ribbon />
        <div className="flex h-[13px] items-center bg-[#dedede] pl-[4px] text-[#222]">
          <div className="flex h-[10px] w-[89px] items-center border border-[#aaa] bg-[#eaeaea] pl-[1px]">
            <T w={5} className="leading-[8px]">Str</T>
            <T w={67} className="ml-[7px] leading-[8px]">tural Plan : 10 - Wo - G.A. Si</T>
            <Caret className="ml-[3px]" />
          </div>
        </div>
        <div className="flex h-[436px]">
          <Browser />
          <div className="w-[1px] shrink-0 bg-[#cfcfcf]" />
          <Canvas />
        </div>
        <StatusBar />
        <Taskbar />
      </div>
      <div className="mt-auto flex h-[64px] shrink-0 items-center justify-between bg-[#29a9e1] pr-[27px] pl-[12px] text-white">
        <span className="mb-[8px] font-['Liberation_Sans',sans-serif] text-[14.500px] leading-4">32</span>
        <div className="flex w-[86px] justify-end">
          <span className="mb-[1px] origin-right scale-x-[.85] font-['Liberation_Serif',serif] text-[38.500px] leading-[40px]">ARUP</span>
        </div>
      </div>
    </div>
  );
}
